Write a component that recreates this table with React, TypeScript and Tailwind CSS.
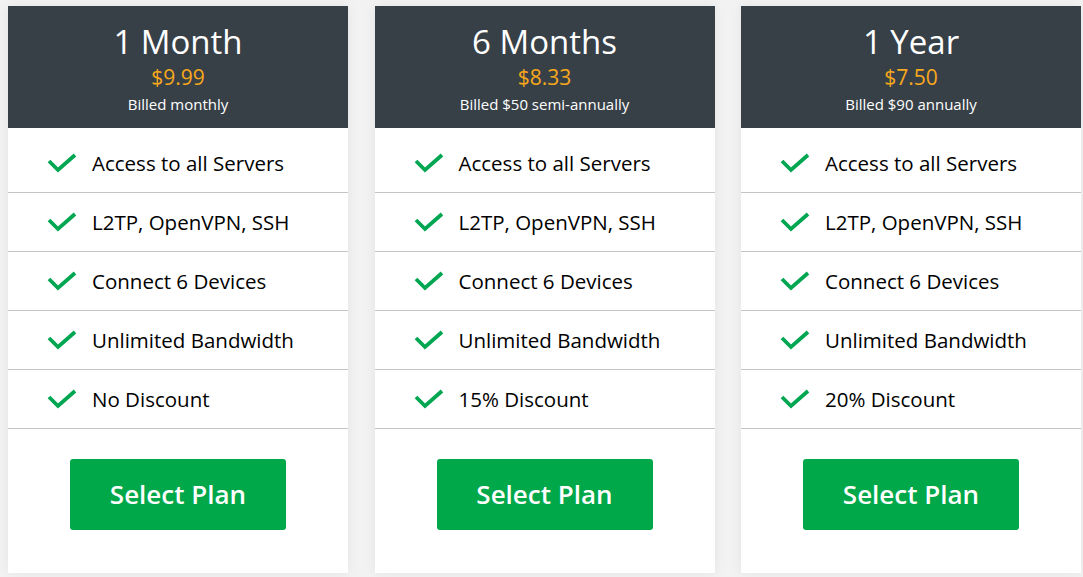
import React from "react";

const plans = [
  { title: "1 Month", price: "$9.99", billed: "Billed monthly", discount: "No Discount" },
  { title: "6 Months", price: "$8.33", billed: "Billed $50 semi-annually", discount: "15% Discount" },
  { title: "1 Year", price: "$7.50", billed: "Billed $90 annually", discount: "20% Discount" },
];

function Check() {
  return (
    <svg width="30" height="20" viewBox="0 0 30 20" className="shrink-0">
      <polyline points="2,8 11,17 28,2" fill="none" stroke="#00a651" strokeWidth="3.8" />
    </svg>
  );
}

export default function App() {
  return (
    <div
      className="min-h-[577px] w-[1083px] bg-[#f2f2f2] pl-[8px] pt-[6px] flex gap-[26.5px]"
      style={{ fontFamily: '"Open Sans", "Noto Sans", sans-serif' }}
    >
      {plans.map((p) => {
        const features = [
          "Access to all Servers",
          "L2TP, OpenVPN, SSH",
          "Connect 6 Devices",
          "Unlimited Bandwidth",
          p.discount,
        ];
        return (
          <div key={p.title} className="w-[340px] h-[567px] bg-white shadow-[0_0_12px_rgba(0,0,0,0.06)] flex flex-col">
            <div className="h-[122px] bg-[#374047] flex flex-col items-center pt-[18px]">
              <div className="text-white text-[33px] leading-[36px]">{p.title}</div>
              <div className="text-[#f7a81b] text-[21px] leading-[24px] mt-[5px]">{p.price}</div>
              <div className="text-white text-[15px] leading-[20px] mt-[5px]">{p.billed}</div>
            </div>
            <div className="pt-[6px]">
              {features.map((f) => (
                <div key={f} className="h-[59px] border-b border-[#c4c4c4] flex items-center pl-[39px] gap-[15px]">
                  <Check />
                  <span className="text-[20.5px] text-black">{f}</span>
                </div>
              ))}
            </div>
            <div className="flex justify-center pt-[30px]">
              <button className="w-[216px] h-[71px] rounded-[3px] bg-[#00a84a] text-white text-[26px] font-semibold">
                Select Plan
              </button>
            </div>
          </div>
        );
      })}
    </div>
  );
}
